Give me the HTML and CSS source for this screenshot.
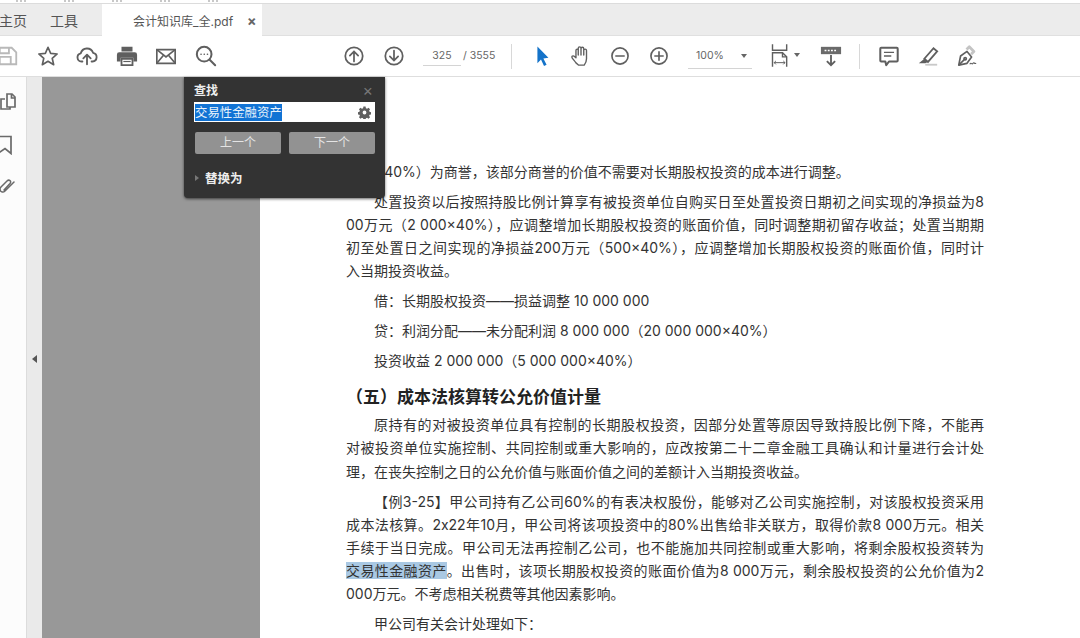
FILE: index.html
```html
<!DOCTYPE html>
<html lang="zh-CN">
<head>
<meta charset="utf-8">
<title>会计知识库_全.pdf</title>
<link rel="stylesheet" href="styles.css">
</head>
<body>
<div class="app">
  <div class="clip-strip"><i></i><i></i><i></i><i></i><i></i></div>
  <div class="tabs">
    <div class="tab">主页</div>
    <div class="tab tab-tools">工具</div>
    <div class="tab tab-doc"><span class="tab-name">会计知识库_全.pdf</span><span class="tab-close">×</span></div>
  </div>
  <div class="toolbar">
    <div class="group group-file">
      <svg class="ico" viewBox="0 0 24 24" fill="none" stroke="#b9b9b9" stroke-width="2"><path d="M-3 3h19l5 5v13H-3z"/><path d="M3 3v6h10V3M3 21v-8h12v8"/></svg>
      <svg class="ico" viewBox="0 0 24 24" fill="none" stroke="#5f5f5f" stroke-width="1.8" stroke-linejoin="round"><path d="M12 2.500l2.900 6.600 7.100.7-5.400 4.700 1.600 7-6.200-3.700-6.200 3.700 1.600-7L2 9.800l7.100-.7z"/></svg>
      <svg class="ico" viewBox="0 0 24 24" fill="none" stroke="#5f5f5f" stroke-width="2" stroke-linecap="round" stroke-linejoin="round"><path d="M7 18H6a4.500 4.500 0 0 1-.8-8.900A7 7 0 0 1 18.600 8.500 4.800 4.800 0 0 1 18 18h-1"/><path d="M12 21v-10M8 14.500l4-4 4 4"/></svg>
      <svg class="ico" viewBox="0 0 24 24"><path fill="#5f5f5f" d="M6 2h12v5H6zM3.500 8h17A2.500 2.500 0 0 1 23 10.500V18h-4v-4H5v4H1v-7.500A2.500 2.500 0 0 1 3.500 8z"/><path fill="none" stroke="#5f5f5f" stroke-width="2" d="M6 15h12v7H6z"/><path stroke="#5f5f5f" stroke-width="1.300" d="M8 18h8"/></svg>
      <svg class="ico" viewBox="0 0 24 24" fill="none" stroke="#5f5f5f" stroke-width="1.800"><path d="M2 5h20v15H2z"/><path d="M2 5l10 8 10-8M2 20l7.500-9M22 20l-7.500-9"/></svg>
      <svg class="ico" viewBox="0 0 24 24" fill="none" stroke="#5f5f5f" stroke-width="2.200" stroke-linecap="round"><circle cx="10" cy="10" r="8"/><path d="M16 16l6 6"/><path stroke-width="1.600" d="M6.500 10h.2M10 10h.2M13.500 10h.2"/></svg>
    </div>
    <div class="group group-nav">
      <svg class="ico" viewBox="0 0 24 24" fill="none" stroke="#5f5f5f" stroke-width="1.900" stroke-linecap="round"><circle cx="12" cy="12" r="9.500"/><path d="M12 18V7M7.500 11.500L12 7l4.500 4.500"/></svg>
      <svg class="ico" viewBox="0 0 24 24" fill="none" stroke="#5f5f5f" stroke-width="1.900" stroke-linecap="round"><circle cx="12" cy="12" r="9.500"/><path d="M12 6v11M7.500 12.500L12 17l4.500-4.500"/></svg>
    </div>
    <div class="pager"><span class="page-input">325</span><span class="page-total">/ 3555</span></div>
    <div class="sep"></div>
    <div class="group group-tools">
      <svg class="ico" viewBox="0 0 24 24"><path fill="#1473c9" d="M7 1.500l12 12.500-5.500.6 3.500 7-2.800 1.400-3.300-7.100L7 20z"/></svg>
      <svg class="ico" viewBox="0 0 24 24" fill="none" stroke="#5f5f5f" stroke-width="1.500" stroke-linecap="round" stroke-linejoin="round"><path d="M6.500 19.500C5 17 2 14.500 2 13c0-1.500 2-1.500 3.500 0L6.500 14V6c0-2 2.500-2 2.500 0v5V3.500c0-2 3-2 3 0V11V4c0-2 3-2 3 0v7V6c0-2 3-2 3 0v9c0 3-1 5-2.500 7H9.500z"/></svg>
      <svg class="ico" viewBox="0 0 24 24" fill="none" stroke="#5f5f5f" stroke-width="1.800" stroke-linecap="round"><circle cx="12" cy="12" r="8.800"/><path d="M7.500 12h9"/></svg>
      <svg class="ico" viewBox="0 0 24 24" fill="none" stroke="#5f5f5f" stroke-width="1.800" stroke-linecap="round"><circle cx="12" cy="12" r="8.800"/><path d="M7.500 12h9M12 7.500v9"/></svg>
    </div>
    <div class="zoom-select"><span>100%</span><i class="caret"></i></div>
    <div class="group group-fit">
      <svg class="ico-fit" viewBox="0 0 24 28" fill="none" stroke="#5f5f5f" stroke-width="1.700"><path d="M3 0v7h17V0"/><path d="M3 27v-17h12l5 5v12"/><path d="M15 10v5h5"/><path d="M5 22h13M5 22l2-2M5 22l2 2M18 22l-2-2M18 22l-2 2" stroke-width="1.200"/></svg>
      <i class="caret caret-fit"></i>
      <svg class="ico ico-read" viewBox="0 0 24 24" fill="none"><path fill="#6a6a6a" d="M1 2h22v8H1z"/><path stroke="#fff" stroke-width="1.600" stroke-dasharray="2 1.500" d="M5 6h14"/><path stroke="#5f5f5f" stroke-width="2" d="M12 11v11M7.500 17.500L12 22l4.500-4.500"/></svg>
    </div>
    <div class="sep sep-b"></div>
    <div class="group group-comment">
      <svg class="ico" viewBox="0 0 24 24" fill="none" stroke="#5f5f5f" stroke-width="2.200" stroke-linejoin="round"><path d="M3.500 3h17a1 1 0 0 1 1 1v13a1 1 0 0 1-1 1H12l-3 4-1-4H3.500a1 1 0 0 1-1-1V4a1 1 0 0 1 1-1z"/><path stroke-width="1.400" d="M6.500 8h11M6.500 12h8"/></svg>
      <svg class="ico" viewBox="0 0 24 24"><path fill="none" stroke="#5f5f5f" stroke-width="2" d="M8 15L18 3.500l4 3.500-10 11.500z"/><path fill="#5f5f5f" d="M8 15l4 3.500-3 1.500H2z"/><path fill="#c9c9c9" d="M9 20.500h13v2H9z"/></svg>
      <svg class="ico" viewBox="0 0 24 24" fill="none" stroke="#5f5f5f" stroke-width="1.800" stroke-linejoin="round"><path d="M3 22l2-10 7-5 5 6-5 7z"/><path d="M3 22l6-6"/><circle cx="10" cy="15" r="1.300"/><path stroke="#c4c4c4" stroke-width="3" d="M11.500 5l3-3 5 5-3 3"/><path stroke-width="1.200" d="M15 21c2-3 2 1 3.500-1s1 1 3.500 0"/></svg>
    </div>
  </div>
  <div class="main">
    <div class="rail">
      <svg class="rail-ico" viewBox="0 0 16 20" fill="none" stroke="#6a6a6a" stroke-width="1.700"><path d="M7 1h5l3 3v10H7z"/><path d="M11.500 1v4H15"/><path d="M5 6H1v10h9v-2"/></svg>
      <svg class="rail-ico" viewBox="0 0 16 20" fill="none" stroke="#6a6a6a" stroke-width="1.700"><path d="M-2 1.500h13v17l-6-5-7 5z"/></svg>
      <svg class="rail-ico" viewBox="0 0 16 20" fill="none" stroke="#6a6a6a" stroke-width="1.500" stroke-linecap="round"><path d="M14 5L5 14c-2 2-5 1-5-2 0-1 1-2 1-2l6-6c2-2 5 0 3 2.500L4 13"/></svg>
    </div>
    <div class="collapse"><i class="collapse-arrow"></i></div>
    <div class="canvas">
      <div class="page">
        <div class="l c1">（2 000×40%）为商誉，该部分商誉的价值不需要对长期股权投资的成本进行调整。</div>
        <div class="l i j c2">处置投资以后按照持股比例计算享有被投资单位自购买日至处置投资日期初之间实现的净损益为8</div>
        <div class="l j">00万元（2 000×40%），应调整增加长期股权投资的账面价值，同时调整期初留存收益；处置当期期</div>
        <div class="l j">初至处置日之间实现的净损益200万元（500×40%），应调整增加长期股权投资的账面价值，同时计</div>
        <div class="l">入当期投资收益。</div>
        <div class="l i gap">借：长期股权投资——损益调整 10 000 000</div>
        <div class="l i gap">贷：利润分配——未分配利润 8 000 000（20 000 000×40%）</div>
        <div class="l i gap">投资收益 2 000 000（5 000 000×40%）</div>
        <h2 class="h">（五）成本法核算转公允价值计量</h2>
        <div class="l i j">原持有的对被投资单位具有控制的长期股权投资，因部分处置等原因导致持股比例下降，不能再</div>
        <div class="l j">对被投资单位实施控制、共同控制或重大影响的，应改按第二十二章金融工具确认和计量进行会计处</div>
        <div class="l">理，在丧失控制之日的公允价值与账面价值之间的差额计入当期投资收益。</div>
        <div class="l i j gap">【例3-25】甲公司持有乙公司60%的有表决权股份，能够对乙公司实施控制，对该股权投资采用</div>
        <div class="l j">成本法核算。2x22年10月，甲公司将该项投资中的80%出售给非关联方，取得价款8 000万元。相关</div>
        <div class="l j">手续于当日完成。甲公司无法再控制乙公司，也不能施加共同控制或重大影响，将剩余股权投资转为</div>
        <div class="l j"><mark class="hit">交易性金融资产</mark>。出售时，该项长期股权投资的账面价值为8 000万元，剩余股权投资的公允价值为2</div>
        <div class="l">000万元。不考虑相关税费等其他因素影响。</div>
        <div class="l i gap">甲公司有关会计处理如下：</div>
      </div>
    </div>
  </div>
  <div class="find">
    <div class="find-head"><span>查找</span><span class="find-close">×</span></div>
    <div class="find-input"><span class="find-sel">交易性金融资产</span>
      <svg class="gear" viewBox="0 0 24 24"><path fill="#5f5f5f" fill-rule="evenodd" d="M10 1h4l.6 3 2.200.9 2.600-1.700 2.800 2.800-1.700 2.600.9 2.200 3 .6v4l-3 .6-.9 2.200 1.700 2.600-2.800 2.800-2.600-1.700-2.200.9-.6 3h-4l-.6-3-2.200-.9-2.600 1.700-2.800-2.800 1.700-2.600-.9-2.200-3-.6v-4l3-.6.9-2.200L1.800 6l2.800-2.800 2.600 1.700L9.400 4zM12 8.500a3.500 3.500 0 1 0 0 7 3.500 3.500 0 0 0 0-7z"/></svg>
    </div>
    <div class="find-btns"><div class="find-btn">上一个</div><div class="find-btn">下一个</div></div>
    <div class="find-replace"><i class="find-tri"></i><span>替换为</span></div>
  </div>
</div>
</body>
</html>
```

FILE: styles.css
```css
* { box-sizing: border-box; }
html, body { margin: 0; padding: 0; height: 100%; overflow: hidden; }
body { font-family: Inter, "Noto Sans CJK SC", "Noto Sans", sans-serif; color: #333; background: #fff; }
.app { position: relative; width: 1080px; height: 638px; display: flex; flex-direction: column; overflow: hidden; }
.clip-strip { height: 4px; flex: none; background: #fff; border-bottom: 1px solid #dcdcdc; display: flex; align-items: flex-start; gap: 38px; padding-left: 16px; overflow: hidden; }
.clip-strip i { display: block; flex: none; width: 10px; height: 2px; background: repeating-linear-gradient(90deg, #c8c8c8 0 2px, transparent 2px 4px); }
.tabs { height: 32px; flex: none; background: #ececec; display: flex; align-items: stretch; border-bottom: 1px solid #e0e0e0; font-size: 14px; color: #555; }
.tab { display: flex; align-items: center; height: 100%; flex: none; }
.tab:first-child { margin-left: -1px; width: 51px; }
.tab-tools { width: 52px; }
.tab-doc { background: #fff; width: 160px; padding-left: 31px; font-size: 12px; margin-bottom: -1px; height: 32px; }
.tab-name { white-space: nowrap; width: 98px; }
.tab-close { margin-left: 16px; font-size: 14px; font-weight: 700; color: #666; }
.toolbar { height: 41px; flex: none; display: flex; align-items: center; background: #fff; border-bottom: 1px solid #dedede; position: relative; }
.group { display: flex; align-items: center; flex: none; }
.ico { width: 22px; height: 22px; flex: none; display: block; }
.group-file { gap: 17.500px; margin-left: -3px; width: 342px; }
.group-nav { gap: 18px; margin-left: 4px; }
.pager { display: flex; align-items: baseline; font-size: 10.500px; color: #666; margin-left: 18px; width: 88px; flex: none; }
.page-input { width: 38px; text-align: center; border-bottom: 1px solid #d4d4d4; height: 20px; line-height: 20px; margin-right: 2px; }
.sep { width: 1px; height: 25px; background: #d8d8d8; flex: none; }
.group-tools { gap: 17px; margin-left: 19px; }
.zoom-select { display: flex; align-items: center; justify-content: space-between; width: 64px; height: 26px; margin-left: 18px; border-bottom: 1px solid #d4d4d4; font-size: 10.500px; color: #666; padding: 0 5px 0 8px; flex: none; }
.caret { display: block; width: 0; height: 0; border: 3.500px solid transparent; border-top: 4px solid #666; border-bottom: 0; }
.group-fit { margin-left: 18px; }
.ico-fit { width: 20px; height: 24px; display: block; flex: none; }
.caret-fit { margin-left: 4px; margin-bottom: 2px; }
.ico-read { margin-left: 20px; }
.sep-b { margin-left: 17px; }
.group-comment { gap: 17px; margin-left: 18px; }
.main { flex: 1; display: flex; min-height: 0; }
.rail { width: 27px; flex: none; background: #fcfcfc; border-right: 1px solid #dcdcdc; display: flex; flex-direction: column; align-items: flex-start; gap: 22px; padding-top: 16px; overflow: hidden; }
.rail-ico { width: 16px; height: 20px; display: block; flex: none; }
.collapse { width: 15px; flex: none; background: #eaeaea; display: flex; align-items: center; justify-content: center; padding-top: 2px; }
.collapse-arrow { display: block; width: 0; height: 0; border: 4px solid transparent; border-right: 5px solid #555; border-left: 0; margin-left: -1px; }
.canvas { flex: 1; min-width: 0; background: #989898; padding-left: 218px; overflow: hidden; }
.page { background: #fff; height: 100%; padding: 82.600px 96px 0 86px; font-size: 14px; line-height: 23.200px; color: #333; overflow: hidden; }
.l { height: 23.200px; white-space: nowrap; }
.i { padding-left: 28px; }
.j { text-align: justify; text-align-last: justify; white-space: normal; }
.c1 { margin-left: -24px; }
.c2 { margin-top: 6.800px; }
.gap { margin-top: 6.800px; }
.h { margin: 12px 0 3px 0; font-size: 17px; line-height: 26px; font-weight: 700; color: #222; }
.hit { background: #a9c8e3; color: #333; }
.find { position: absolute; left: 184px; top: 77px; width: 201px; height: 121px; background: #333; border-radius: 0 0 4px 4px; box-shadow: 0 1px 3px rgba(0,0,0,.6); color: #eee; padding: 0 10px; z-index: 2; }
.find-head { display: flex; justify-content: space-between; align-items: center; height: 23px; font-size: 12px; font-weight: 700; padding-top: 2px; }
.find-close { color: #777; font-size: 16px; font-weight: 400; margin-right: 2px; }
.find-input { height: 20px; background: #fff; display: flex; align-items: center; justify-content: space-between; padding: 0 4px 0 1px; margin-top: 2px; width: 181px; }
.find-sel { background: #1173d4; color: #e8f2fb; font-size: 12.400px; line-height: 17px; }
.gear { width: 13px; height: 13px; display: block; }
.find-btns { display: flex; gap: 8px; margin-top: 10px; margin-left: 1px; }
.find-btn { width: 86px; height: 22px; background: #929292; border-radius: 2px; color: #e4e4e4; font-size: 12px; line-height: 22px; text-align: center; }
.find-replace { display: flex; align-items: center; gap: 6px; margin-top: 14px; font-size: 12.500px; font-weight: 700; }
.find-tri { display: block; width: 0; height: 0; border: 3.500px solid transparent; border-left: 4px solid #777; border-right: 0; margin-left: 1px; }
```
